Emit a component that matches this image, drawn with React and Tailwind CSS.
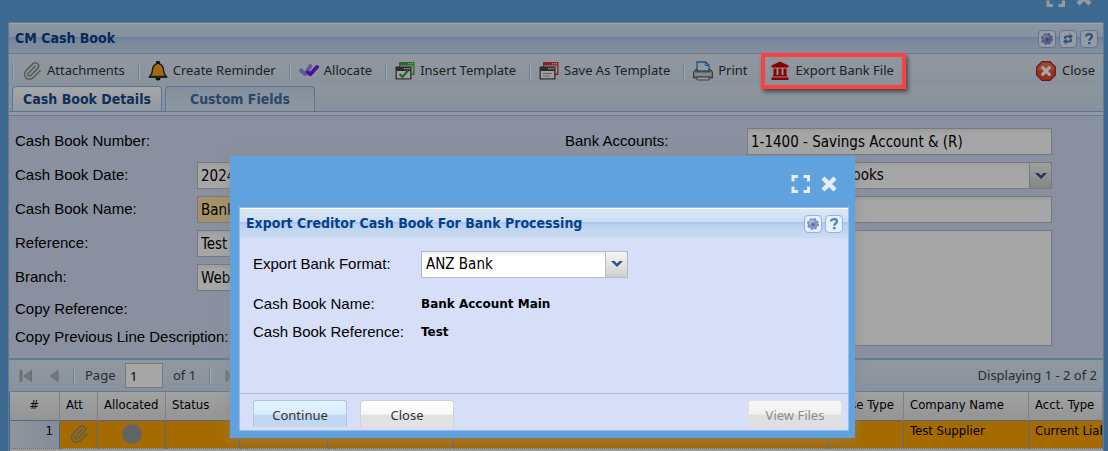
import React, { useState } from 'react';
import { Paperclip } from 'lucide-react';

const BellIcon = () => (
  <svg width="20" height="20" viewBox="0 0 20 20">
    <path d="M10 1.200a1.600 1.600 0 0 1 1.600 1.700c2.300.8 3.600 2.900 3.800 5.600.2 3.400.8 5.100 2.900 7.300H1.700c2.100-2.200 2.700-3.900 2.900-7.300.2-2.700 1.500-4.800 3.800-5.600A1.600 1.600 0 0 1 10 1.200z" fill="#f9a11b" stroke="#2b2b2b" strokeWidth="1.500" />
    <path d="M8.300 0h3.400v3H8.300z" fill="#222" />
    <path d="M1 14.800h18v2H1z" fill="#2b2b2b" />
    <path d="M7.500 17h5a2.500 2.500 0 0 1-5 0z" fill="#111" />
  </svg>
);

const AllocateIcon = () => (
  <svg width="20" height="20" viewBox="0 0 20 20" fill="none" strokeWidth="3.800" strokeLinecap="round" strokeLinejoin="round">
    <path d="M2 9.500l4 3.500L11.500 5" stroke="#8f86ee" />
    <path d="M9 11.500l2.300 1.800L18 6" stroke="#6a1fe0" />
  </svg>
);

const TemplateIcon = ({ color, children }) => (
  <svg width="20" height="20" viewBox="0 0 20 20">
    <path d="M4 1h15.500v13H4z" fill={color} />
    <path d="M5.200 4.500h13v8h-13z" fill="#d8e4d8" />
    <path d="M13 2.200h1.200v1H13zM15 2.200h1.200v1H15zM17 2.200h1.200v1H17z" fill="#fff" />
    <path d="M.5 5.500h16v13H.5z" fill="#444" />
    <path d="M1.800 10h13.400v7.300H1.800z" fill="#f4f4f4" />
    <path d="M9 7h1.400v1.200H9zM11.300 7h1.400v1.200h-1.400zM13.600 7H15v1.200h-1.400z" fill="#fff" />
    {children}
  </svg>
);

const PrinterIcon = () => (
  <svg width="20" height="20" viewBox="0 0 20 20">
    <path d="M4 10V1h8.500L16 4.300V10z" fill="#dcebf9" stroke="#3a7ec0" strokeWidth="1.300" />
    <path d="M12.300 1v3.500H16" fill="none" stroke="#3a7ec0" />
    <path d="M2.500 8.500H4V11h12V8.500h1.500L19.500 11v6h-19v-6z" fill="#8d9095" stroke="#55585c" />
    <path d="M1.500 11.500h17V15h-17z" fill="#cfd2d5" />
    <path d="M4 16h12v3H4z" fill="#e7eef6" stroke="#55606c" />
  </svg>
);

const BankIcon = () => (
  <svg width="18" height="20" viewBox="0 0 18 20" fill="#d80000">
    <path d="M9 .5l8.500 4v2H.5v-2z" />
    <path d="M2.500 7.500h3v6.500h-3zM7.500 7.500h3v6.500h-3zM12.500 7.500h3v6.500h-3z" />
    <path d="M1.800 14h14.400v1.500H1.800zM.5 16.500h17v2.500H.5z" />
  </svg>
);

const CloseIcon = () => (
  <svg width="20" height="20" viewBox="0 0 20 20">
    <path d="M6 .7h8L19.300 6v8L14 19.300H6L.7 14V6z" fill="#ec4a33" stroke="#a02818" strokeWidth="1.200" />
    <path d="M6.300 1.800h7.400l4.500 4.500v3.200H1.800V6.300z" fill="#f3806e" opacity=".6" />
    <path d="M6.700 6.700l6.600 6.600M13.300 6.700l-6.600 6.600" stroke="#fff" strokeWidth="3.200" strokeLinecap="round" />
  </svg>
);

const GearIcon = () => (
  <svg width="14" height="14" viewBox="0 0 14 14">
    <circle cx="7" cy="7" r="5" fill="#8592c8" />
    <circle cx="7" cy="7" r="5.300" fill="none" stroke="#7482bb" strokeWidth="1.400" strokeDasharray="2.400 1.760" />
    <circle cx="6" cy="5.600" r="2.800" fill="#aab5e0" />
    <circle cx="7" cy="7.200" r="1.700" fill="#5d66a3" />
  </svg>
);

const RefreshIcon = () => (
  <svg width="14" height="14" viewBox="0 0 14 14" fill="#4c7fb8">
    <path d="M3 7V5.500C3 4.100 4 3.400 5.200 3.400h3.300V1.200L12 4.500 8.500 7.400V5.400H5.400c-.4 0-.6.200-.6.600v1z" />
    <path d="M11 7v1.500c0 1.400-1 2.100-2.200 2.100H5.500v2.200L2 9.500l3.500-2.900v2h3.100c.4 0 .6-.2.600-.6V7z" />
  </svg>
);

const HelpIcon = () => (
  <svg width="14" height="14" viewBox="0 0 14 14">
    <path d="M4 4.600C4 3 5.300 2.200 7 2.200s3 .8 3 2.300c0 2-2.700 2-2.700 4.200" fill="none" stroke="#4c7fb8" strokeWidth="2.200" />
    <path d="M6.100 10h2.400v2.300H6.100z" fill="#4c7fb8" />
  </svg>
);

const toolIcons = { Settings: GearIcon, Refresh: RefreshIcon, Help: HelpIcon };

const WindowTitle = ({ title, tools }) => (
  <div className="flex h-[30px] items-center justify-between border-t border-white bg-[linear-gradient(#dae7f6,#cddef3_45%,#abc7ec_46%,#abc7ec_50%,#b8cfee_51%,#cbddf3)] pr-[5px] pl-1.5">
    <h2 className="text-[14px] font-bold text-[#04408c]">{title}</h2>
    <div className="flex gap-[3px]">
      {tools.map((name) => {
        const Icon = toolIcons[name];
        return (
          <button key={name} type="button" aria-label={name} className="flex size-[18px] items-center justify-center rounded-[4px] border border-[#8fb4e6] bg-[#e6f0fb]">
            <Icon />
          </button>
        );
      })}
    </div>
  </div>
);

const WindowControls = () => (
  <div className="flex items-center gap-2.5">
    <button type="button" aria-label="Maximize">
      <svg width="20" height="20" viewBox="0 0 20 20" fill="none" stroke="#e4effa" strokeWidth="3">
        <path d="M2 7.500V2.500H7M12.500 2.500h5V7.500M17.500 12.500v5H12.500M7 17.500H2V12.500" />
      </svg>
    </button>
    <button type="button" aria-label="Close window">
      <svg width="16" height="16" viewBox="0 0 16 16" stroke="#e4effa" strokeWidth="4.500">
        <path d="M2 2l12 12M14 2L2 14" />
      </svg>
    </button>
  </div>
);

const Separator = () => (
  <span className="h-[17px] w-0.5 shrink-0 border-r border-l border-r-white border-l-[#98c8ff]" />
);

const toolbarItems = [
  { label: 'Attachments', icon: <Paperclip size={20} color="#8c8c8c" strokeWidth={1.8} /> },
  { label: 'Create Reminder', icon: <BellIcon /> },
  { label: 'Allocate', icon: <AllocateIcon /> },
  {
    label: 'Insert Template',
    icon: (
      <TemplateIcon color="#3fa535">
        <path d="M4.500 13l3 3 5.500-6.500" fill="none" stroke="#27a344" strokeWidth="2" />
      </TemplateIcon>
    ),
  },
  {
    label: 'Save As Template',
    icon: (
      <TemplateIcon color="#d9333f">
        <path d="M4 12.500h9M4 15h7" fill="none" stroke="#999" />
      </TemplateIcon>
    ),
  },
  { label: 'Print', icon: <PrinterIcon /> },
];

const inputStyle = 'h-[27px] w-[305px] border border-[#b5b8c8] bg-white bg-linear-to-b from-[#eef0f0] to-white to-20% px-[3px] text-[15px] text-black';

const Field = ({ id, label, children }) => (
  <div className="flex h-[27px] items-center">
    <label htmlFor={id} className="w-[182px] shrink-0 font-['Liberation_Sans',sans-serif] text-[15px] text-black">{label}</label>
    {children}
  </div>
);

const ComboBox = ({ id, options, width }) => (
  <div className={`relative h-[27px] ${width}`}>
    <select id={id} className="h-full w-full appearance-none border border-[#b5b8c8] bg-white bg-linear-to-b from-[#eef0f0] to-white to-20% px-1 text-[15px] text-black">
      {options.map((option) => (
        <option key={option}>{option}</option>
      ))}
    </select>
    <span className="pointer-events-none absolute top-0 right-0 flex h-full w-[23px] items-center justify-center rounded-tr-[3px] border border-[#b5b8c8] bg-linear-to-b from-[#f6f6f6] to-[#cfcfcf]">
      <svg width="12" height="8" viewBox="0 0 12 8">
        <path d="M0 1h3.500L6 3.500 8.500 1H12L6 7z" fill="#2f4f8f" />
      </svg>
    </span>
  </div>
);

const PageArrow = ({ label, d }) => (
  <button type="button" aria-label={label} disabled>
    <svg width="14" height="14" viewBox="0 0 14 14">
      <path d={d} fill="#b4b7bc" stroke="#a3a6ab" />
    </svg>
  </button>
);

const columns = ['#', 'Att', 'Allocated', 'Status', 'Date', 'Invoice', 'Description', 'Base Type', 'Company Name', 'Acct. Type'];
const columnWidths = ['w-[50px]', 'w-[38px]', 'w-[68px]', 'w-[74px]', 'w-[88px]', 'w-[126px]', 'w-[375px]', 'w-[75px]', 'w-[125px]', ''];

const CashBookForm = () => (
  <div className="grid grid-cols-2 gap-x-3 bg-[#d6def8] py-3 pl-1.5">
    <div className="flex flex-col gap-[7px]">
      <Field id="number" label="Cash Book Number:">
        <output id="number" />
      </Field>
      <Field id="date" label="Cash Book Date:">
        <input id="date" className={inputStyle} defaultValue="2024-06-12" />
      </Field>
      <Field id="name" label="Cash Book Name:">
        <input id="name" className="h-[27px] w-[305px] border border-[#b5b8c8] bg-[#ffe0a3] px-[3px] text-[15px] text-black" defaultValue="Bank Account Main" />
      </Field>
      <Field id="reference" label="Reference:">
        <input id="reference" className={inputStyle} defaultValue="Test" />
      </Field>
      <Field id="branch" label="Branch:">
        <input id="branch" className={inputStyle} defaultValue="Web Branch" />
      </Field>
      <div className="flex h-[23px] items-center font-['Liberation_Sans',sans-serif] text-[15px] text-black">Copy Reference:</div>
      <div className="flex h-[18px] items-center font-['Liberation_Sans',sans-serif] text-[15px] text-black">Copy Previous Line Description:</div>
    </div>
    <div className="flex flex-col gap-[7px]">
      <Field id="accounts" label="Bank Accounts:">
        <input id="accounts" className={inputStyle} defaultValue="1-1400 - Savings Account & (R)" />
      </Field>
      <Field id="type" label="Cash Book Type:">
        <ComboBox id="type" width="w-[305px]" options={['Creditor Cashbooks']} />
      </Field>
      <Field id="amount" label="Amount:">
        <input id="amount" className={inputStyle} />
      </Field>
      <div className="flex">
        <label htmlFor="notes" className="w-[182px] shrink-0 font-['Liberation_Sans',sans-serif] text-[15px] text-black">Notes:</label>
        <textarea id="notes" className="h-[116px] w-[305px] resize-none border border-[#b5b8c8] bg-white" />
      </div>
    </div>
  </div>
);

const cellStyle = 'overflow-hidden border border-dotted border-[#a3a3b5]';

const LinesGrid = () => (
  <table className="w-full table-fixed border-collapse text-[13px] whitespace-nowrap text-black">
    <colgroup>
      {columnWidths.map((width, i) => (
        <col key={i} className={width} />
      ))}
    </colgroup>
    <thead>
      <tr className="h-7 bg-linear-to-b from-[#f9f9f9] to-[#e3e4e6]">
        {columns.map((column, i) => (
          <th key={column} className={`overflow-hidden border-r border-[#c5c5c5] pb-0.5 font-normal ${i === 0 ? 'text-center' : 'pl-1.5 text-left'}`}>{column}</th>
        ))}
      </tr>
    </thead>
    <tbody>
      <tr className="h-7 bg-[#ffa500]">
        <td className={`${cellStyle} bg-linear-to-r from-[#dfe5ee] to-[#c8d8ee] pr-1.5 pb-1.5 text-right`}>1</td>
        <td className={cellStyle}>
          <Paperclip className="mx-auto" size={20} color="#8c8c8c" strokeWidth={1.8} />
        </td>
        <td className={cellStyle}>
          <span className="mx-auto block size-5 rounded-full bg-[#999]" />
        </td>
        <td className={cellStyle} />
        <td className={cellStyle} />
        <td className={cellStyle} />
        <td className={`${cellStyle} pb-1.5 pl-1.5`}>Trade Supplier</td>
        <td className={cellStyle} />
        <td className={`${cellStyle} pb-1.5 pl-1.5`}>Test Supplier</td>
        <td className={`${cellStyle} pb-1.5 pl-1.5`}>Current Liability</td>
      </tr>
      <tr className="h-7 bg-[#eeeeee]">
        <td colSpan={10} />
      </tr>
    </tbody>
  </table>
);

const ExportDialog = () => (
  <div role="dialog" aria-label="Export Creditor Cash Book For Bank Processing" className="absolute top-[156px] left-[230px] z-20 w-[625px] bg-[#60a2de] pr-1.5 pb-[7px] pl-[9px] shadow-[0_2px_10px_rgba(136,136,136,0.6)]">
    <div className="flex h-[51px] items-center justify-end pt-1 pr-3">
      <WindowControls />
    </div>
    <div className="border border-[#99bce8] bg-[#d6def8]">
      <WindowTitle title="Export Creditor Cash Book For Bank Processing" tools={['Settings', 'Help']} />
      <div className="flex h-[156px] flex-col border-b border-[#99bce8] px-[13px] pt-3 font-['Liberation_Sans',sans-serif] text-[15px] text-black">
        <div className="flex h-7 items-center">
          <label htmlFor="format" className="w-[168px]">Export Bank Format:</label>
          <div className="font-['DejaVu_Sans_Condensed','Noto_Sans',sans-serif]">
            <ComboBox id="format" width="w-[207px]" options={['ANZ Bank']} />
          </div>
        </div>
        <div className="mt-3 flex h-7 items-center">
          <span className="w-[168px]">Cash Book Name:</span>
          <b className="font-['DejaVu_Sans',sans-serif] text-[12px]">Bank Account Main</b>
        </div>
        <div className="flex h-7 items-center">
          <span className="w-[168px]">Cash Book Reference:</span>
          <b className="font-['DejaVu_Sans',sans-serif] text-[12px]">Test</b>
        </div>
      </div>
      <div className="flex gap-[13px] pt-1.5 pr-1.5 pb-[3px] pl-[13px] font-['Noto_Sans',sans-serif] text-[13px] text-[#333]">
        <button type="button" className="h-[27px] w-[94px] rounded-t-[3px] border border-b-0 border-[#a4c8ef] bg-linear-to-b from-[#e4f3ff] from-0% via-[#d9edff] via-50% to-[#c2d8f2] to-55% pt-1">Continue</button>
        <button type="button" className="h-[27px] w-[94px] rounded-t-[3px] border border-b-0 border-[#d1d1d1] bg-linear-to-b from-white from-0% via-[#f9f9f9] via-50% to-[#e2e2e2] to-55% pt-1">Close</button>
        <button type="button" disabled className="ml-auto h-[27px] w-[94px] rounded-t-[3px] border border-b-0 border-[#e1e1e1] bg-linear-to-b from-[#f7f7f7] from-0% via-[#f1f1f1] via-50% to-[#dfdfe0] to-55% pt-1 text-[#8c8c8c]">View Files</button>
      </div>
    </div>
  </div>
);

const App = () => {
  const [activeTab, setActiveTab] = useState('Cash Book Details');

  return (
    <div className="relative h-screen overflow-hidden bg-[#60a2de] font-['DejaVu_Sans_Condensed','Noto_Sans',sans-serif]">
      <div className="flex h-[22px] items-end justify-end pr-4 pb-3.5">
        <WindowControls />
      </div>

      <div className="mr-1 ml-2 border border-[#99bce8]">
        <WindowTitle title="CM Cash Book" tools={['Settings', 'Refresh', 'Help']} />

        <div className="flex h-[33px] items-center border-t border-[#99bce8] bg-linear-to-b from-[#dfe9f5] to-[#d3e1f1] pt-0.5 pl-[3px] font-['Noto_Sans',sans-serif] text-[13px] whitespace-nowrap text-[#333]">
          {toolbarItems.map((item) => (
            <React.Fragment key={item.label}>
              <Separator />
              <button type="button" className="flex items-center gap-[5px] pr-[13px] pl-2">
                {item.icon}
                {item.label}
              </button>
            </React.Fragment>
          ))}
          <Separator />
          <button type="button" className="relative flex items-center gap-[7px] pr-2.5 pl-2">
            <BankIcon />
            Export Bank File
            <span className="absolute -inset-x-0.5 -inset-y-2 z-30 border-4 border-[#fd4040] shadow-[2px_3px_4px_rgba(0,0,0,0.5)]" />
          </button>
          <button type="button" className="ml-auto flex items-center gap-1.5 pr-2">
            <CloseIcon />
            Close
          </button>
        </div>

        <div className="flex h-[26px] items-end gap-[3px] border-b border-[#8db2e3] bg-linear-to-b from-[#dbe5f1] to-[#d0ddef] pl-[3px]">
          {['Cash Book Details', 'Custom Fields'].map((tab) => (
            <button
              key={tab}
              type="button"
              onClick={() => setActiveTab(tab)}
              className={`h-[25px] w-[150px] rounded-t-[4px] border border-b-0 border-[#8db2e3] text-[14px] font-bold ${activeTab === tab ? 'bg-linear-to-b from-white to-[#deecfd] text-[#15498b]' : 'bg-linear-to-b from-[#c9dcf2] to-[#dce9f7] text-[#416da3]'}`}
            >
              {tab}
            </button>
          ))}
        </div>
        <div className="h-1 border-b border-[#99bce8] bg-[#deecfd]" />

        <CashBookForm />

        <div className="flex h-[34px] items-center border-t-2 border-b border-[#99bce8] bg-linear-to-b from-[#dfe9f5] to-[#d3e1f1] pr-1.5 pl-2.5 font-['Noto_Sans',sans-serif] text-[13px] text-[#444]">
          <PageArrow label="First page" d="M1 1.500h2v11H1zM12.500 1.500v11L5 7z" />
          <span className="w-3.5" />
          <PageArrow label="Previous page" d="M11 1.500v11L3.500 7z" />
          <span className="w-3" />
          <Separator />
          <label htmlFor="page" className="w-[50px] pl-2.5">Page</label>
          <input id="page" className="h-[25px] w-[38px] border border-[#b5b8c8] bg-white px-1 text-black" defaultValue="1" />
          <span className="w-[46px] pl-2.5">of 1</span>
          <Separator />
          <span className="w-3" />
          <PageArrow label="Next page" d="M3 1.500v11L10.500 7z" />
          <span className="ml-auto">Displaying 1 - 2 of 2</span>
        </div>

        <LinesGrid />
      </div>

      <div className="absolute inset-0 z-10 bg-black/35" />
      <ExportDialog />
    </div>
  );
};

export default App;
